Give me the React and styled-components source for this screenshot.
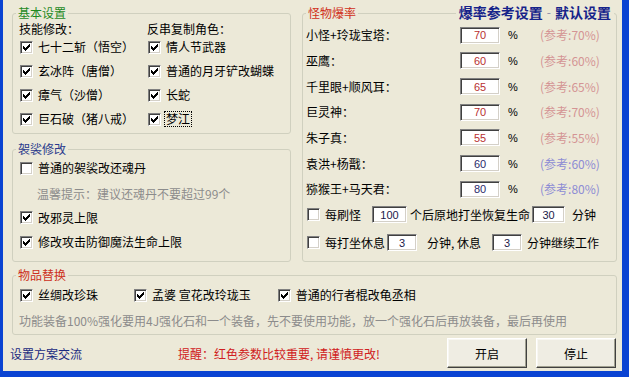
import React from 'react';
import styled, { createGlobalStyle } from 'styled-components';

const GlobalStyle = createGlobalStyle`
  html, body {
    margin: 0;
    padding: 0;
    background: #ece9d8;
  }
  body {
    font-family: "Noto Sans CJK SC", "Liberation Sans", sans-serif;
    font-size: 12px;
    color: #000;
  }
`;

const Window = styled.div`
  width: 629px;
  height: 377px;
  box-sizing: border-box;
  background: #ece9d8;
  border-left: 3px solid #0a43d2;
  border-right: 7px solid #0a43d2;
  border-bottom: 6px solid #0a43d2;
  padding: 6px 5px 0 9px;
  display: flex;
  flex-direction: column;
`;

const TopArea = styled.div`
  display: grid;
  grid-template-columns: 279px 315px;
  column-gap: 11px;
  height: 256px;
`;

const LeftColumn = styled.div`
  display: flex;
  flex-direction: column;
  gap: 8px;
`;

const Group = styled.fieldset`
  margin: 0;
  margin-top: ${(p) => p.$mt || 0}px;
  min-width: 0;
  box-sizing: border-box;
  height: ${(p) => p.$h}px;
  padding: ${(p) => p.$pad || '0 6px'};
  border: 1px solid #d0d0bf;
  border-radius: 3px;
  position: relative;
`;

const Legend = styled.legend`
  padding: 0 2px;
  margin-left: ${(p) => p.$ml || 0}px;
  line-height: 14px;
  color: ${(p) => p.$color};
`;

const RateLinks = styled.div`
  position: absolute;
  top: -15px;
  right: 2px;
  padding: 0 3px;
  background: #ece9d8;
  line-height: 14px;
  font-size: 14px;
  font-weight: bold;
  color: #16238a;
  display: flex;
  gap: 4px;
`;

const Dash = styled.span`
  color: #8a8aa8;
  font-weight: normal;
  font-size: 12px;
`;

const SkillGrid = styled.div`
  display: grid;
  grid-template-columns: 128px auto;
  grid-template-rows: 12px repeat(4, 24px);
  align-items: center;
  padding-top: 3px;
  line-height: 14px;
`;

const Heading = styled.div`
  line-height: 14px;
`;

const CheckItem = styled.label`
  display: flex;
  align-items: center;
  gap: 4px;
  line-height: 14px;
  white-space: nowrap;
  margin-left: ${(p) => p.$ml || 0}px;
`;

const Box = styled.span`
  width: 13px;
  height: 13px;
  flex: none;
  box-sizing: border-box;
  background: #fff;
  border: 1px solid;
  border-color: #808080 #fff #fff #808080;
  box-shadow: inset 1px 1px 0 #404040, inset -1px -1px 0 #d4d0c8;
  position: relative;
`;

const Mark = styled.svg`
  position: absolute;
  left: -1px;
  top: -1px;
`;

const Caption = styled.span`
  padding: 0 1px;
  outline: ${(p) => (p.$focus ? '1px dotted #000' : 'none')};
`;

const Check = ({ checked = true, focus, children, ml }) => (
  <CheckItem $ml={ml}>
    <Box>
      {checked && (
        <Mark width="13" height="13" viewBox="0 0 13 13" shapeRendering="crispEdges">
          <polygon points="3,5 5,7 10,2 10,5 5,10 3,8" fill="#000" />
        </Mark>
      )}
    </Box>
    <Caption $focus={focus}>{children}</Caption>
  </CheckItem>
);

const RowList = styled.div`
  display: flex;
  flex-direction: column;
  padding-top: ${(p) => p.$top || 0}px;
`;

const Row = styled.div`
  height: ${(p) => p.$h}px;
  display: flex;
  align-items: center;
  padding-left: ${(p) => p.$pl || 0}px;
  line-height: 14px;
  white-space: nowrap;
`;

const Hint = styled.div`
  height: ${(p) => p.$h}px;
  display: flex;
  align-items: center;
  padding-left: ${(p) => p.$pl || 0}px;
  color: #8c8c8c;
  white-space: nowrap;
`;

const RateRow = styled.div`
  height: 25.7px;
  display: grid;
  grid-template-columns: 154px 40px 40px auto;
  align-items: center;
  line-height: 14px;
  white-space: nowrap;
`;

const Field = styled.span`
  display: inline-flex;
  align-items: center;
  justify-content: center;
  box-sizing: border-box;
  width: ${(p) => p.$w}px;
  height: 17px;
  flex: none;
  background: #fff;
  border: 1px solid;
  border-color: #808080 #fff #fff #808080;
  box-shadow: inset 1px 1px 0 #404040, inset -1px -1px 0 #d4d0c8;
  font-family: "Liberation Sans", sans-serif;
  font-size: 11px;
  color: ${(p) => p.$color || '#1a1a4a'};
  margin-left: ${(p) => p.$ml || 0}px;
  margin-right: ${(p) => p.$mr || 0}px;
`;

const Percent = styled.span`
  padding-left: 8px;
  font-family: "Liberation Sans", sans-serif;
  font-size: 11px;
`;

const Reference = styled.span`
  color: ${(p) => (p.$tone === 'blue' ? '#8c8cd4' : '#d49494')};
`;

const Text = styled.span`
  margin-left: ${(p) => p.$ml || 0}px;
`;

const Footer = styled.div`
  height: 36px;
  margin-right: 1px;
  display: flex;
  align-items: center;
  white-space: nowrap;
`;

const LinkText = styled.span`
  color: #1a2a80;
  margin-left: -2px;
`;

const Warning = styled.span`
  color: #d02020;
  margin-left: 96px;
`;

const Buttons = styled.div`
  margin-left: auto;
  display: flex;
  gap: 9px;
`;

const Button = styled.button`
  width: 80px;
  height: 30px;
  padding: 0;
  font: inherit;
  color: #000;
  background: #efede3;
  border: 1px solid;
  border-color: #fff #404040 #404040 #fff;
  box-shadow: inset -1px -1px 0 #a0a090, inset 1px 1px 0 #f8f7f2;
  border-radius: 0;
`;

const rates = [
  { name: '小怪+玲珑宝塔：', value: 70, tone: 'red' },
  { name: '巫鹰：', value: 60, tone: 'red' },
  { name: '千里眼+顺风耳：', value: 65, tone: 'red' },
  { name: '巨灵神：', value: 70, tone: 'red' },
  { name: '朱子真：', value: 55, tone: 'red' },
  { name: '袁洪+杨戬：', value: 60, tone: 'blue' },
  { name: '猕猴王+马天君：', value: 80, tone: 'blue' },
];

const skills = ['七十二斩（悟空）', '玄冰阵（唐僧）', '瘴气（沙僧）', '巨石破（猪八戒）'];
const roles = ['情人节武器', '普通的月牙铲改蝴蝶', '长蛇', '梦江'];

const App = () => {
  return (
    <Window>
      <GlobalStyle />
      <TopArea>
        <LeftColumn>
          <Group $h={128}>
            <Legend $ml={-3} $color="#1e8a1e">基本设置</Legend>
            <SkillGrid>
              <Heading>技能修改：</Heading>
              <Heading>反串复制角色：</Heading>
              {skills.map((s, i) => (
                <React.Fragment key={s}>
                  <Check ml={1}>{s}</Check>
                  <Check ml={1} focus={i === 3}>{roles[i]}</Check>
                </React.Fragment>
              ))}
            </SkillGrid>
          </Group>
          <Group $h={120}>
            <Legend $ml={-3} $color="#2a3a8c">袈裟修改</Legend>
            <RowList>
              <Row $h={24.7} $pl={1}>
                <Check checked={false}>普通的袈裟改还魂丹</Check>
              </Row>
              <Hint $h={24.7} $pl={18}>温馨提示：建议还魂丹不要超过99个</Hint>
              <Row $h={24.7} $pl={1}>
                <Check>改邪灵上限</Check>
              </Row>
              <Row $h={24.7} $pl={1}>
                <Check>修改攻击防御魔法生命上限</Check>
              </Row>
            </RowList>
          </Group>
        </LeftColumn>

        <Group $h={256} $pad="0 3px">
          <Legend $ml={0} $color="#d03020">怪物爆率</Legend>
          <RateLinks>
            <span>爆率参考设置</span>
            <Dash>-</Dash>
            <span>默认设置</span>
          </RateLinks>
          <RowList $top={2.3}>
            {rates.map((r) => (
              <RateRow key={r.name}>
                <span>{r.name}</span>
                <Field $w={40} $color={r.tone === 'red' ? '#b83030' : '#2a2a6a'}>{r.value}</Field>
                <Percent>%</Percent>
                <Reference $tone={r.tone}>(参考:{r.value}%)</Reference>
              </RateRow>
            ))}
            <Row $h={25.7} $pl={1}>
              <Check checked={false}>每刷怪</Check>
              <Field $w={35} $ml={10} $mr={3}>100</Field>
              <Text>个后原地打坐恢复生命</Text>
              <Field $w={33} $ml={2}>30</Field>
              <Text $ml={7}>分钟</Text>
            </Row>
            <Row $h={30} $pl={1}>
              <Check checked={false}>每打坐休息</Check>
              <Field $w={30} $ml={1}>3</Field>
              <Text $ml={10}>分钟, 休息</Text>
              <Field $w={30} $ml={11}>3</Field>
              <Text $ml={5}>分钟继续工作</Text>
            </Row>
          </RowList>
        </Group>
      </TopArea>

      <Group $h={67} $mt={6}>
        <Legend $ml={-3} $color="#cc3020">物品替换</Legend>
        <RowList>
          <Row $h={26} $pl={1}>
            <Check>丝绸改珍珠</Check>
            <Check ml={35}>孟婆 宣花改玲珑玉</Check>
            <Check ml={26}>普通的行者棍改龟丞相</Check>
          </Row>
          <Hint $h={25}>功能装备100%强化要用4J强化石和一个装备，先不要使用功能，放一个强化石后再放装备，最后再使用</Hint>
        </RowList>
      </Group>

      <Footer>
        <LinkText>设置方案交流</LinkText>
        <Warning>提醒：红色参数比较重要, 请谨慎更改!</Warning>
        <Buttons>
          <Button>开启</Button>
          <Button>停止</Button>
        </Buttons>
      </Footer>
    </Window>
  );
};

export default App;
